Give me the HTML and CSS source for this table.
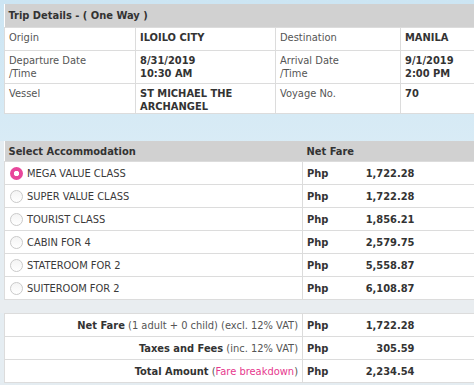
FILE: index.html
```html
<!DOCTYPE html>
<html>
<head>
<meta charset="utf-8">
<link rel="stylesheet" href="styles.css">
</head>
<body>
<div class="page">
  <table class="trip">
    <colgroup>
      <col class="c1"><col class="c2"><col class="c3"><col class="c4">
    </colgroup>
    <tr class="head"><th colspan="4">Trip Details - ( One Way )</th></tr>
    <tr class="r1">
      <td class="lbl">Origin</td><td class="val">ILOILO CITY</td>
      <td class="lbl">Destination</td><td class="val">MANILA</td>
    </tr>
    <tr class="r2">
      <td class="lbl">Departure Date<br>/Time</td><td class="val">8/31/2019<br>10:30 AM</td>
      <td class="lbl">Arrival Date<br>/Time</td><td class="val">9/1/2019<br>2:00 PM</td>
    </tr>
    <tr class="r3">
      <td class="lbl">Vessel</td><td class="val">ST MICHAEL THE<br>ARCHANGEL</td>
      <td class="lbl">Voyage No.</td><td class="val">70</td>
    </tr>
  </table>

  <div class="lower">
    <table class="acc">
      <colgroup>
        <col class="a1"><col class="a2"><col class="a3"><col class="a4">
      </colgroup>
      <tr class="head"><th>Select Accommodation</th><th colspan="3">Net Fare</th></tr>
      <tr><td class="opt"><span class="radio on"></span>MEGA VALUE CLASS</td><td class="cur">Php</td><td class="amt">1,722.28</td><td class="pad"></td></tr>
      <tr><td class="opt"><span class="radio"></span>SUPER VALUE CLASS</td><td class="cur">Php</td><td class="amt">1,722.28</td><td class="pad"></td></tr>
      <tr><td class="opt"><span class="radio"></span>TOURIST CLASS</td><td class="cur">Php</td><td class="amt">1,856.21</td><td class="pad"></td></tr>
      <tr><td class="opt"><span class="radio"></span>CABIN FOR 4</td><td class="cur">Php</td><td class="amt">2,579.75</td><td class="pad"></td></tr>
      <tr><td class="opt"><span class="radio"></span>STATEROOM FOR 2</td><td class="cur">Php</td><td class="amt">5,558.87</td><td class="pad"></td></tr>
      <tr><td class="opt"><span class="radio"></span>SUITEROOM FOR 2</td><td class="cur">Php</td><td class="amt">6,108.87</td><td class="pad"></td></tr>
    </table>

    <div class="spacer"></div>

    <table class="sum">
      <colgroup>
        <col class="a1"><col class="a2"><col class="a3"><col class="a4">
      </colgroup>
      <tr><td class="desc"><b>Net Fare</b> (1 adult + 0 child) (excl. 12% VAT)</td><td class="cur">Php</td><td class="amt">1,722.28</td><td class="pad"></td></tr>
      <tr><td class="desc"><b>Taxes and Fees</b> (inc. 12% VAT)</td><td class="cur">Php</td><td class="amt">305.59</td><td class="pad"></td></tr>
      <tr><td class="desc"><b>Total Amount</b> (<span class="link">Fare breakdown</span>)</td><td class="cur">Php</td><td class="amt">2,234.54</td><td class="pad"></td></tr>
    </table>
  </div>
</div>
</body>
</html>
```

FILE: styles.css
```css
html, body {
  margin: 0;
  padding: 0;
  overflow: hidden;
}

body {
  width: 474px;
  height: 385px;
  font-family: "DejaVu Sans", Verdana, sans-serif;
  font-stretch: condensed;
  font-size: 11px;
  color: #555;
  background: linear-gradient(180deg, #cce5f3 0%, #d6eaf5 30%, #e2eff7 60%, #e4ecf1 100%);
}

.page {
  padding-top: 4px;
}

table {
  border-collapse: collapse;
  table-layout: fixed;
  background: #fff;
}

.trip {
  width: 474px;
  margin-left: 4px;
}

.trip .c1 { width: 131px; }
.trip .c2 { width: 140px; }
.trip .c3 { width: 125px; }
.trip .c4 { width: 78px; }

.head th {
  background: #d1d1d1;
  color: #333;
  font-weight: bold;
  text-align: left;
  padding: 0 4px;
  line-height: 13px;
}

.trip .head th {
  height: 23px;
}

.trip td {
  vertical-align: top;
  padding: 4px 4px 0;
  line-height: 12.5px;
  border: 1px solid #dcdcdc;
  border-right: none;
}

.trip td:first-child { border-left: 1px solid #dcdcdc; }

.trip .r1 td { height: 18px; }
.trip .r2 td { height: 28px; }
.trip .r3 td { height: 25px; }

.trip .lbl { color: #555; }
.trip .val { color: #333; font-weight: bold; }

.lower {
  margin-top: 27px;
  padding-left: 4px;
  background: #e5edf2;
}

.acc, .sum {
  width: 470px;
}

.a1 { width: 298px; }
.a2 { width: 56px; }
.a3 { width: 60px; }
.a4 { width: 56px; }

.acc .head th {
  height: 20px;
}

.acc td, .sum td {
  height: 22px;
  padding: 0 4px;
  border-top: 1px solid #dcdcdc;
  border-bottom: 1px solid #dcdcdc;
  line-height: 13px;
  vertical-align: middle;
}

.acc td:first-child, .sum td:first-child {
  border-left: 1px solid #dcdcdc;
  border-right: 1px solid #dcdcdc;
}

.opt {
  color: #3a3a3a;
}

.acc td.opt {
  padding-left: 5px;
}

.radio {
  display: inline-block;
  box-sizing: border-box;
  width: 13px;
  height: 13px;
  border-radius: 50%;
  border: 1px solid #cacaca;
  background: linear-gradient(180deg, #f4f4f4, #fff);
  vertical-align: -3px;
  margin-right: 4px;
}

.radio.on {
  border: none;
  background: radial-gradient(circle, #fff 0 2.4px, #e8479b 3px);
}

.cur {
  color: #333;
  font-weight: bold;
}

.amt {
  color: #333;
  font-weight: bold;
  text-align: right;
}

.spacer {
  height: 13px;
  background: #e9edf0;
  margin-left: -4px;
}

.sum .desc {
  text-align: right;
  color: #555;
}

.sum .desc b {
  color: #333;
}

.link {
  color: #e6388e;
}
```
